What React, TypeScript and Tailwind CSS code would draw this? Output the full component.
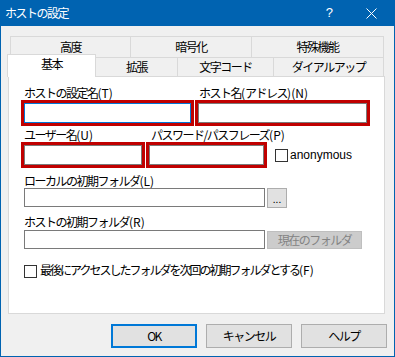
import React from 'react';

const Tab = ({ label, className }: { label: string; className: string }) => (
  <div className={`flex items-center justify-center border-[#d9d9d9] bg-[#f0f0f0] ${className}`}>{label}</div>
);

// mnemonic in parens keeps normal spacing, the Japanese part is tightened
const Label = ({ text, k }: { text: string; k: string }) => (
  <>
    {text}
    <span className="tracking-normal">({k})</span>
  </>
);

const RedBox = ({ width, focused }: { width: string; focused?: boolean }) => (
  <div className={`p-[3px] bg-[#c00000] ${width}`}>
    <div
      className={`h-[20px] bg-white border ${
        focused ? 'border-[#0078d7]' : 'border-[#7a7a7a]'
      }`}
    />
  </div>
);

const CheckBox = () => <div className="w-[13px] h-[13px] border border-[#333333] bg-white shrink-0" />;

const Button = ({ label, primary }: { label: string; primary?: boolean }) => (
  <div
    className={`w-[86px] h-[24px] flex items-center justify-center bg-[#e1e1e1] ${
      primary ? 'border-2 border-[#0078d7]' : 'border border-[#adadad]'
    }`}
  >
    {label}
  </div>
);

export default function App() {
  return (
    <div className="w-[395px] h-[357px] bg-[#f0f0f0] border border-t-0 border-[#0063b1] flex flex-col font-['Noto_Sans_CJK_JP',sans-serif] text-[12px] tracking-[-1.5px] text-black">
      {/* title bar */}
      <div className="h-[26px] shrink-0 bg-[#0063b1] text-white flex items-center pl-[4px]">
        <span className="leading-[16px]">ホストの設定</span>
        <span className="ml-auto mr-[33px] font-['Liberation_Sans',sans-serif] tracking-normal text-[13px]">?</span>
        <svg width="11" height="11" viewBox="0 0 11 11" className="mr-[17px]">
          <path d="M0.5 0.5 L10.5 10.5 M10.5 0.5 L0.5 10.5" stroke="white" strokeWidth="1" />
        </svg>
      </div>

      {/* tabs */}
      <div className="flex mt-[10px] ml-[9px] h-[21px]">
        <Tab label="高度" className="w-[120px] border-l border-t" />
        <Tab label="暗号化" className="w-[121px] border-l border-t" />
        <Tab label="特殊機能" className="w-[133px] border-l border-t border-r" />
      </div>
      <div className="flex items-end -mt-[3px] ml-[6px] h-[22px]">
        <div className="relative z-10 w-[89px] h-[23px] -mb-px bg-white border-l border-t border-r border-[#d9d9d9] flex justify-center pt-[1px] leading-[16px]">
          基本
        </div>
        <Tab label="拡張" className="w-[82px] h-[19px] border-t border-r" />
        <Tab label="文字コード" className="w-[96px] h-[19px] border-t border-r" />
        <Tab label="ダイアルアップ" className="w-[110px] h-[19px] border-t border-r" />
      </div>

      {/* panel */}
      <div className="ml-[7px] w-[377px] h-[238px] bg-white border border-[#d9d9d9] flex flex-col">
        <div className="flex mt-[8px] ml-[15px] h-[15px] leading-[15px]">
          <span className="w-[175px]">
            <Label text="ホストの設定名" k="T" />
          </span>
          <span>
            ホスト名<span className="tracking-normal">(</span>アドレス<span className="tracking-normal">)</span>
            <Label text="" k="N" />
          </span>
        </div>
        <div className="flex gap-[1px] ml-[12px]">
          <RedBox width="w-[173px]" focused />
          <RedBox width="w-[175px]" />
        </div>

        <div className="flex mt-[2px] ml-[15px] h-[14px] leading-[14px]">
          <span className="w-[127px]">
            <Label text="ユーザー名" k="U" />
          </span>
          <span>
            <Label text="パスワード/パスフレーズ" k="P" />
          </span>
        </div>
        <div className="flex items-center ml-[12px]">
          <RedBox width="w-[124px]" />
          <div className="ml-[1px]">
            <RedBox width="w-[121px]" />
          </div>
          <div className="ml-[8px] flex items-center gap-[2px]">
            <CheckBox />
            <span className="font-['Liberation_Sans',sans-serif] tracking-normal text-[12px]">anonymous</span>
          </div>
        </div>

        <div className="mt-[6px] ml-[15px] h-[14px] leading-[14px]">
          <Label text="ローカルの初期フォルダ" k="L" />
        </div>
        <div className="flex ml-[15px] gap-[2px]">
          <div className="w-[241px] h-[19px] border border-[#7a7a7a] bg-white" />
          <div className="w-[20px] h-[20px] bg-[#e1e1e1] border border-[#adadad] flex items-center justify-center text-[10px] tracking-normal leading-none pt-[2px]">
            ...
          </div>
        </div>

        <div className="mt-[6px] ml-[15px] h-[16px] leading-[16px]">
          <Label text="ホストの初期フォルダ" k="R" />
        </div>
        <div className="flex ml-[15px] gap-[2px]">
          <div className="w-[241px] h-[19px] border border-[#7a7a7a] bg-white" />
          <div className="w-[95px] h-[18px] mt-[1px] bg-[#cccccc] border border-[#bfbfbf] text-[#838383] flex items-center justify-center">
            現在のフォルダ
          </div>
        </div>

        <div className="flex items-start gap-[3px] mt-[13px] ml-[15px] h-[16px] leading-[15px]">
          <div className="mt-[3px]">
            <CheckBox />
          </div>
          <span className="tracking-[-2px]">
            <Label text="最後にアクセスしたフォルダを次回の初期フォルダとする" k="F" />
          </span>
        </div>
      </div>

      {/* buttons */}
      <div className="flex justify-end gap-[9px] mt-[10px] mr-[7px]">
        <Button label="OK" primary />
        <Button label="キャンセル" />
        <Button label="ヘルプ" />
      </div>
    </div>
  );
}
